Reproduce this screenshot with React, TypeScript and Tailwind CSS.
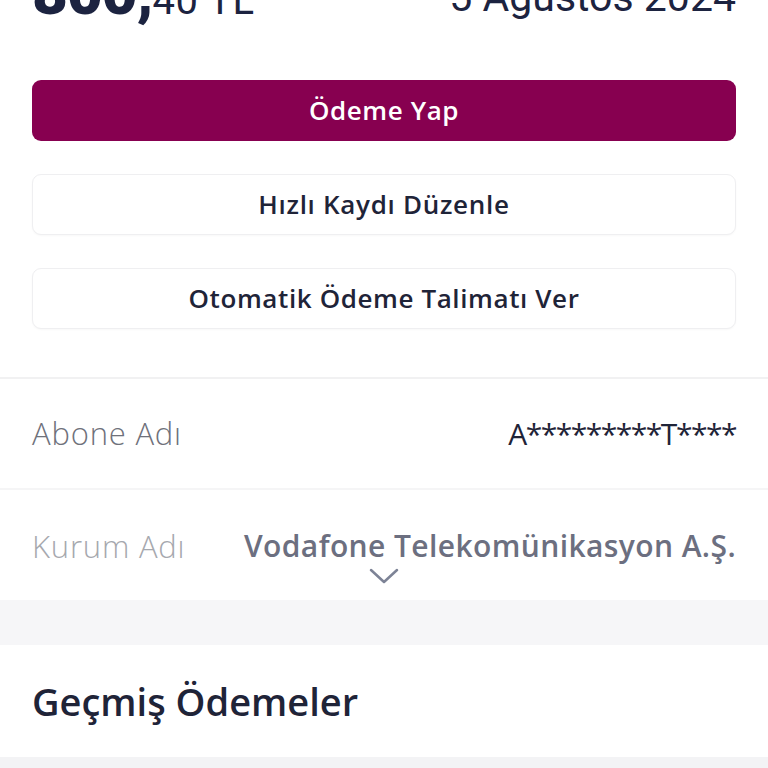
import React from "react";

const os = { fontFamily: "'Open Sans', Lato, sans-serif" };

export default function App() {
  return (
    <div className="w-[768px] h-[768px] overflow-hidden bg-white" style={os}>
      {/* header amount (clipped at top) */}
      <div className="h-[64px] -mt-[38px] flex items-baseline justify-between px-8 text-[#1c2340]" style={{ fontFamily: "Roboto, sans-serif" }}>
        <div className="flex items-baseline leading-none">
          <span className="text-[62px] font-black tracking-[-1px]">800,</span>
          <span className="text-[40px] font-normal tracking-[0.5px]">40 TL</span>
        </div>
        <div className="relative -top-[3px] text-[41px] font-normal leading-none">5 Ağustos 2024</div>
      </div>

      <div className="px-8 pt-[54px] flex flex-col gap-[33px]">
        <button className="h-[61px] w-full rounded-[9px] bg-[#870050] text-white text-[26px] font-semibold tracking-[0.6px]">
          Ödeme Yap
        </button>
        <button className="h-[61px] w-full rounded-[9px] bg-white border border-[#efeff1] shadow-[0_1px_2px_rgba(0,0,0,0.03)] text-[#1f2438] text-[26px] font-semibold tracking-[0.7px]">
          Hızlı Kaydı Düzenle
        </button>
        <button className="h-[61px] w-full rounded-[9px] bg-white border border-[#efeff1] shadow-[0_1px_2px_rgba(0,0,0,0.03)] text-[#1f2438] text-[26px] font-semibold tracking-[0.6px]">
          Otomatik Ödeme Talimatı Ver
        </button>
      </div>

      <div className="mt-[48px] h-[2px] bg-[#f1f1f2]" />
      <div className="h-[109px] flex items-center justify-between px-8">
        <span className="text-[31px] font-light tracking-[0.8px] text-[#6f717b]">Abone Adı</span>
        <span className="text-[30px] font-normal tracking-[-1.5px] text-[#1f2438]">A*********T****</span>
      </div>
      <div className="h-[2px] bg-[#f5f5f6]" />
      <div className="h-[110px] flex flex-col px-8 pt-[36px]">
        <div className="flex justify-between items-center h-[40px]">
          <span className="text-[31px] font-light tracking-[0.8px] text-[#a6a8ae] leading-[40px]">Kurum Adı</span>
          <span className="text-[30px] font-semibold tracking-[0.4px] text-[#6c6f80] leading-[40px]">Vodafone Telekomünikasyon A.Ş.</span>
        </div>
        <div className="flex justify-center pt-[2px]">
          <svg width="30" height="16" viewBox="0 0 30 16">
            <path d="M2 2 L15 14 L28 2" fill="none" stroke="#7d8396" strokeWidth="2.5" strokeLinecap="round" strokeLinejoin="round" />
          </svg>
        </div>
      </div>
      <div className="h-[45px] bg-[#f6f6f8]" />
      <div className="h-[112px] flex items-center px-8">
        <h2 className="text-[38px] font-semibold text-[#1f2438]">Geçmiş Ödemeler</h2>
      </div>
      <div className="h-[11px] bg-[#f3f3f5]" />
    </div>
  );
}
